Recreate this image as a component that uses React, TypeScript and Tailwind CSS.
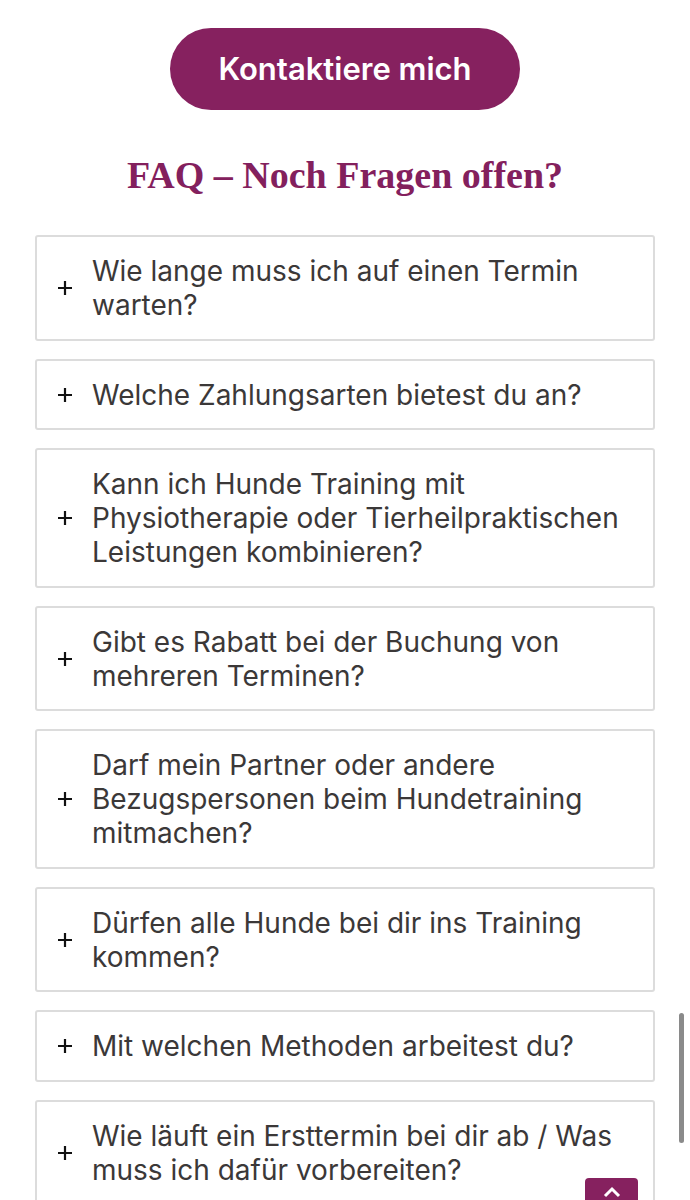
import React from "react";

const faqs = [
  "Wie lange muss ich auf einen Termin warten?",
  "Welche Zahlungsarten bietest du an?",
  "Kann ich Hunde Training mit Physiotherapie oder Tierheilpraktischen Leistungen kombinieren?",
  "Gibt es Rabatt bei der Buchung von mehreren Terminen?",
  "Darf mein Partner oder andere Bezugspersonen beim Hundetraining mitmachen?",
  "Dürfen alle Hunde bei dir ins Training kommen?",
  "Mit welchen Methoden arbeitest du?",
  "Wie läuft ein Ersttermin bei dir ab / Was muss ich dafür vorbereiten?",
  "Wie lange dauert ein Training?",
];

function PlusIcon() {
  return (
    <svg width="16" height="16" viewBox="0 0 16 16" className="shrink-0">
      <path d="M8 1v14M1 8h14" stroke="#111" strokeWidth="2.2" strokeLinecap="butt" />
    </svg>
  );
}

export default function App() {
  return (
    <div className="relative h-[1200px] overflow-hidden bg-white font-['Inter',sans-serif]">
      <div className="flex flex-col items-center pt-[28px]">
        <button className="flex h-[82px] w-[350px] items-center justify-center rounded-full bg-[#86215f] text-[31px] font-semibold text-white">
          Kontaktiere mich
        </button>
        <h2 className="mt-[43px] font-['Liberation_Serif',serif] text-[38px] font-bold leading-[44px] text-[#83205d]">
          FAQ – Noch Fragen offen?
        </h2>
      </div>
      <div className="mt-[38px] flex flex-col gap-[18px] px-[35px]">
        {faqs.map((q) => (
          <div
            key={q}
            className="flex items-center gap-[19px] rounded-[3px] border-2 border-[#dcdcdc] pb-[16.5px] pl-[20px] pr-[18px] pt-[17px]"
          >
            <PlusIcon />
            <span className="text-[28px] leading-[34px] text-[#3b3838]">{q}</span>
          </div>
        ))}
      </div>
      <div className="absolute right-[6px] top-[1013px] h-[130px] w-[5px] rounded-full bg-[#8a8a8a]" />
      <button className="absolute left-[585px] top-[1178px] flex h-[54px] w-[53px] items-start justify-center rounded-[4px] bg-[#86215f] pt-[8px]">
        <svg width="20" height="12" viewBox="0 0 20 12">
          <path d="M3 10l7-7 7 7" stroke="#fff" strokeWidth="3" fill="none" />
        </svg>
      </button>
    </div>
  );
}
